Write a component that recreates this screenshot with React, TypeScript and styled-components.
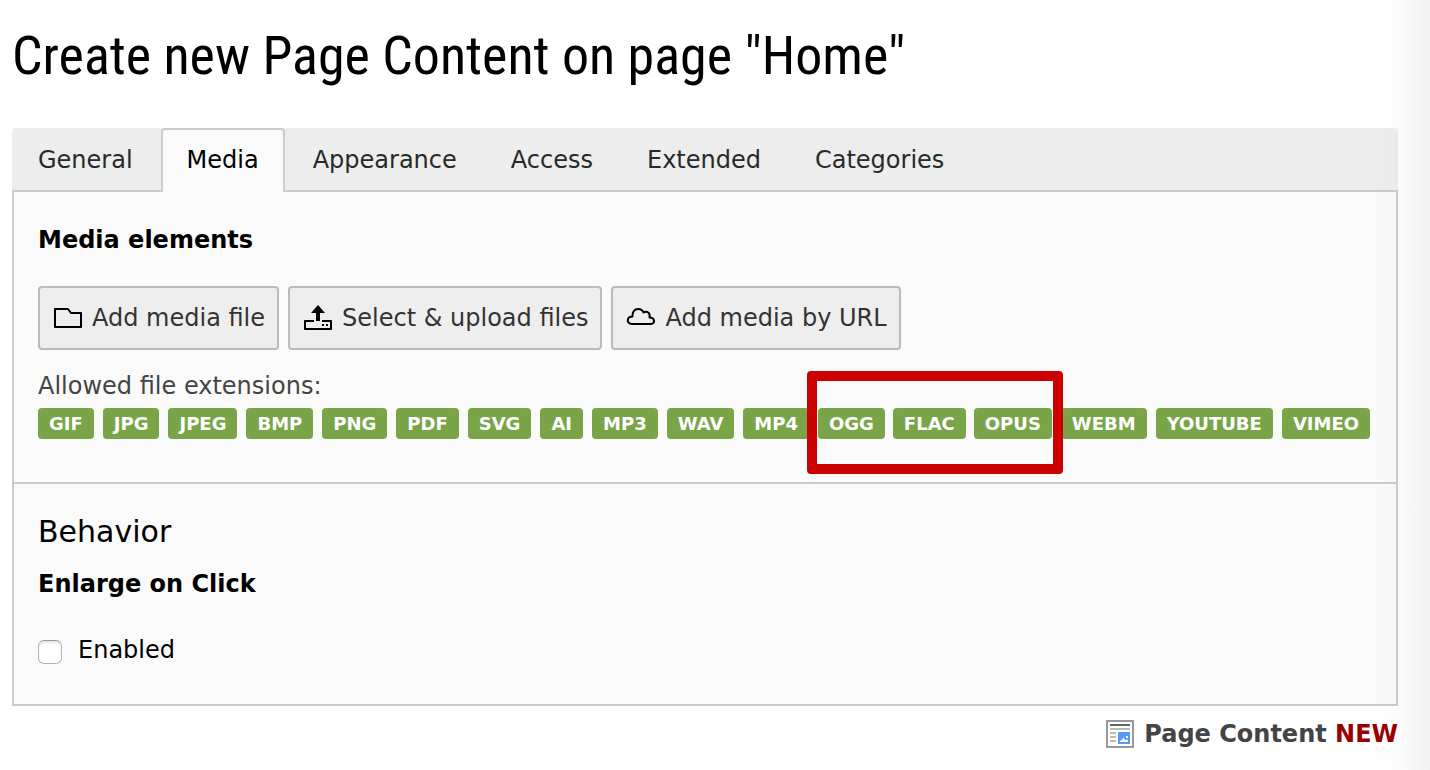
import React from "react";
import styled, { createGlobalStyle, css } from "styled-components";

const GlobalStyle = createGlobalStyle`
  *, *::before, *::after { box-sizing: border-box; }
  body {
    margin: 0;
    background: #fff;
    color: #000;
    font-family: Verdana, "DejaVu Sans", sans-serif;
    font-size: 24px;
    line-height: 32px;
  }
`;

const Page = styled.main`
  position: relative;
  min-height: 100vh;
  padding: 24px 32px 20px 12px;

  &::after {
    content: "";
    position: absolute;
    inset: 0 0 0 auto;
    width: 56px;
    background: linear-gradient(to right, rgba(0, 0, 0, 0), rgba(0, 0, 0, 0.01) 40%, rgba(0, 0, 0, 0.05));
    pointer-events: none;
  }
`;

const Title = styled.h1`
  margin: 0 0 40px;
  font-family: "Liberation Sans Narrow", "Roboto Condensed", sans-serif;
  font-size: 54px;
  font-weight: 400;
  line-height: 64px;
`;

const TabBar = styled.div`
  display: flex;
  gap: 2px;
  height: 64px;
  background: #ededed;
  border-bottom: 2px solid #ccc;
  border-radius: 4px 4px 0 0;
`;

const Tab = styled.button<{ $active?: boolean }>`
  height: 64px;
  padding: 0 24px 2px;
  border: 2px solid transparent;
  border-bottom: 0;
  border-radius: 4px 4px 0 0;
  background: transparent;
  color: #252b29;
  font: inherit;
  cursor: pointer;
  ${(p) =>
    p.$active &&
    css`
      border-color: #ccc;
      background: #fafafa;
      color: #000;
    `}
`;

const Panel = styled.div`
  border: 2px solid #ccc;
  border-top: 0;
  background: #fafafa;
`;

const Section = styled.section`
  padding: 32px 24px 35px;

  & + & {
    padding: 28px 24px 38px;
    border-top: 2px solid #ccc;
  }
`;

const Label = styled.h3`
  margin: 0;
  font-size: 24px;
  font-weight: 700;
  line-height: 32px;
`;

const SectionTitle = styled.h2`
  margin: 0 0 16px;
  font-size: 30px;
  font-weight: 400;
  line-height: 40px;
`;

const Actions = styled.div`
  display: flex;
  flex-wrap: wrap;
  gap: 9px;
  margin: 30px 0 20px;
`;

const ActionButton = styled.button`
  display: flex;
  align-items: center;
  gap: 8px;
  height: 64px;
  padding: 0 12px;
  border: 2px solid #bbb;
  border-radius: 4px;
  background: #eee;
  color: #333;
  font: inherit;
  cursor: pointer;

  svg {
    flex: none;
  }
`;

const Hint = styled.p`
  margin: 0 0 6px;
  color: #444;
`;

const Extensions = styled.div`
  display: flex;
  gap: 9px;
  margin-bottom: 8px;
`;

const Highlight = styled.div`
  position: relative;
  display: flex;
  gap: 8px;

  &::after {
    content: "";
    position: absolute;
    inset: -37px -11px -35px -11px;
    border: 10px solid #c00;
    border-radius: 4px;
    pointer-events: none;
  }
`;

const Badge = styled.span`
  padding: 0 11px;
  border-radius: 4px;
  background: #79a548;
  color: #fff;
  font-size: 18px;
  font-weight: 700;
  line-height: 31px;
  white-space: nowrap;
`;

const CheckLabel = styled.label`
  display: flex;
  align-items: center;
  gap: 16px;
  margin-top: 34px;
`;

const Checkbox = styled.input`
  appearance: none;
  width: 24px;
  height: 24px;
  margin: 4px 0 0;
  border: 1px solid #b4b4b4;
  border-top-color: #999;
  border-radius: 6px;
  background: #fff;
  box-shadow: inset 0 2px 2px rgba(0, 0, 0, 0.1);
`;

const Footer = styled.footer`
  display: flex;
  align-items: center;
  justify-content: flex-end;
  gap: 10px;
  margin-top: 12px;
  color: #444;
  font-weight: 700;
`;

const NewMark = styled.strong`
  color: #900;
`;

const FolderIcon = () => (
  <svg width="32" height="32" viewBox="0 0 32 32" fill="none" stroke="#000" strokeWidth="2" aria-hidden="true">
    <path d="M3 7h13l3 4h10v14H3z" strokeLinejoin="round" />
  </svg>
);

const UploadIcon = () => (
  <svg width="32" height="32" viewBox="0 0 32 32" aria-hidden="true">
    <path d="M16 3l7 8h-5v8h-4v-8H9z" />
    <path d="M12 19H3v8h26v-8h-9" fill="none" stroke="#000" strokeWidth="2" strokeLinejoin="round" />
    <path d="M20 22h2v2h-2zM24 22h2v2h-2z" />
  </svg>
);

const CloudIcon = () => (
  <svg width="32" height="32" viewBox="0 0 32 32" fill="none" stroke="#000" strokeWidth="2" aria-hidden="true">
    <path
      d="M7 22C1 22 1.500 14.500 7.500 14.500C7 10 9.500 7 13 7C16 7 17.500 8 18.500 10.500C22 8.500 25.500 11 24.500 15.500C30 15.500 30.500 22 26 22Z"
      strokeLinejoin="round"
    />
  </svg>
);

const ContentIcon = () => (
  <svg width="28" height="28" viewBox="0 0 28 28" aria-hidden="true">
    <path fill="#fff" stroke="#999" strokeWidth="2" d="M1 1h26v26H1z" />
    <path fill="#666" d="M4 4h20v2H4z" />
    <path fill="#b9b9b9" d="M4 8h20v2H4zM4 12h6v2H4zM4 16h6v2H4zM4 20h6v2H4z" />
    <path fill="#59f" d="M12 12h12v12H12z" />
    <path fill="#fff" d="M20 16h2v2h-2zM14 22v-1l1-1h1l1-2h1l1 2h1l1-1 1 2v1z" />
  </svg>
);

const tabs = ["General", "Media", "Appearance", "Access", "Extended", "Categories"];
const before = ["GIF", "JPG", "JPEG", "BMP", "PNG", "PDF", "SVG", "AI", "MP3", "WAV", "MP4"];
const highlighted = ["OGG", "FLAC", "OPUS"];
const after = ["WEBM", "YOUTUBE", "VIMEO"];

const renderBadge = (name: string) => <Badge key={name}>{name}</Badge>;

export default function App() {
  return (
    <>
      <GlobalStyle />
      <Page>
        <Title>Create new Page Content on page "Home"</Title>
        <TabBar role="tablist">
          {tabs.map((name) => (
            <Tab key={name} type="button" role="tab" aria-selected={name === "Media"} $active={name === "Media"}>
              {name}
            </Tab>
          ))}
        </TabBar>
        <Panel role="tabpanel">
          <Section>
            <Label>Media elements</Label>
            <Actions>
              <ActionButton type="button">
                <FolderIcon />
                Add media file
              </ActionButton>
              <ActionButton type="button">
                <UploadIcon />
                Select &amp; upload files
              </ActionButton>
              <ActionButton type="button">
                <CloudIcon />
                Add media by URL
              </ActionButton>
            </Actions>
            <Hint>Allowed file extensions:</Hint>
            <Extensions>
              {before.map(renderBadge)}
              <Highlight>{highlighted.map(renderBadge)}</Highlight>
              {after.map(renderBadge)}
            </Extensions>
          </Section>
          <Section>
            <SectionTitle>Behavior</SectionTitle>
            <Label>Enlarge on Click</Label>
            <CheckLabel>
              <Checkbox type="checkbox" />
              Enabled
            </CheckLabel>
          </Section>
        </Panel>
        <Footer>
          <ContentIcon />
          <span>
            Page Content <NewMark>NEW</NewMark>
          </span>
        </Footer>
      </Page>
    </>
  );
}
